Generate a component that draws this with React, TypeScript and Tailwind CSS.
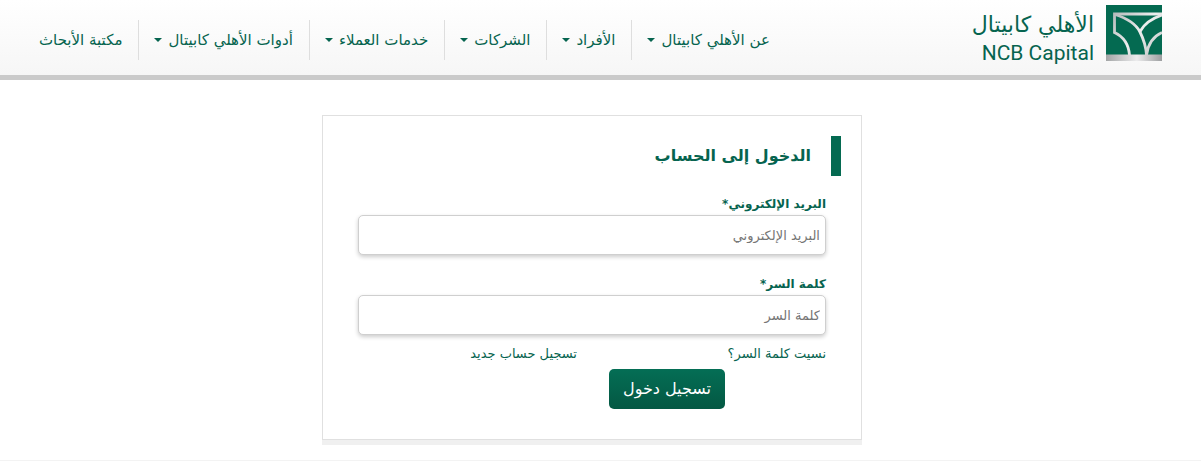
import React, { useState } from "react";

const navItems = [
  { title: "عن الأهلي كابيتال", hasMenu: true },
  { title: "الأفراد", hasMenu: true },
  { title: "الشركات", hasMenu: true },
  { title: "خدمات العملاء", hasMenu: true },
  { title: "أدوات الأهلي كابيتال", hasMenu: true },
  { title: "مكتبة الأبحاث", hasMenu: false },
];

function LogoMark() {
  return (
    <svg viewBox="0 0 56 56" className="h-14 w-14 shrink-0" aria-hidden="true">
      <defs>
        <linearGradient id="silver" x1="0" y1="0" x2="1" y2="0">
          <stop offset="0" stopColor="#a3a5a6" />
          <stop offset="0.55" stopColor="#ececed" />
          <stop offset="1" stopColor="#9c9ea0" />
        </linearGradient>
        <linearGradient id="lines" gradientUnits="userSpaceOnUse" x1="7" y1="8" x2="56" y2="50">
          <stop offset="0" stopColor="#b4b9b9" />
          <stop offset="0.5" stopColor="#eceeee" />
          <stop offset="1" stopColor="#bfc3c3" />
        </linearGradient>
      </defs>
      <rect width="56" height="56" fill="#046a51" />
      <g fill="none" stroke="url(#lines)" strokeWidth="2.8">
        <path d="M56 9H8.500V27.500C16 31 22.500 38 23.500 50" />
        <path d="M9 9.500C20 13 30 19 34 27C37.500 34 40 41 40.500 50" />
        <path d="M56 10C47 13 38.500 18 34 26.500" />
        <path d="M56 27.500C48 31 42 39 40.500 50" />
      </g>
      <rect y="49.500" width="56" height="6.500" fill="url(#silver)" />
    </svg>
  );
}

function Header() {
  return (
    <header className="flex h-20 items-start justify-between border-b-[5px] border-[#cacaca] bg-gradient-to-b from-white to-[#f6f6f6] pr-[39px] pl-6">
      <a href="#" className="flex gap-3 pt-[5px]">
        <LogoMark />
        <span className="flex flex-col pt-1.5 leading-7 whitespace-nowrap">
          <span className="text-[22px]">الأهلي كابيتال</span>
          <span dir="ltr" className="text-right font-[Roboto] text-[21px]">
            NCB Capital
          </span>
        </span>
      </a>
      <nav className="pt-5">
        <ul className="flex divide-x divide-[#dedede] text-[15px] leading-10 whitespace-nowrap">
          {navItems.map((item) => (
            <li key={item.title}>
              <a href="#" className="flex items-center gap-1.5 pr-4 pl-[15px]">
                {item.title}
                {item.hasMenu && (
                  <svg viewBox="0 0 8 4" className="h-1 w-2" fill="currentColor" aria-hidden="true">
                    <path d="M0 0h8L4 4z" />
                  </svg>
                )}
              </a>
            </li>
          ))}
        </ul>
      </nav>
    </header>
  );
}

type FieldProps = {
  id: string;
  type: string;
  label: string;
  value: string;
  onChange: (value: string) => void;
};

function Field({ id, type, label, value, onChange }: FieldProps) {
  return (
    <div className="mb-[19px]">
      <label htmlFor={id} className="block text-xs leading-[21px] font-bold">
        {label}*
      </label>
      <input
        id={id}
        type={type}
        placeholder={label}
        value={value}
        onChange={(e) => onChange(e.target.value)}
        className="h-10 w-full rounded-[5px] border border-[#cfcfcf] bg-white px-[5px] text-[13px] text-gray-700 shadow-[0_2px_4px_rgba(0,0,0,0.2)] placeholder:text-[#757575]"
      />
    </div>
  );
}

export default function App() {
  const [email, setEmail] = useState("");
  const [password, setPassword] = useState("");

  return (
    <div dir="rtl" className="bg-white font-['DejaVu_Sans',sans-serif] text-[#06644f]">
      <Header />

      <main className="border-b border-[#f3f3f3] pt-[35px] pr-[17px] pb-5">
        <section className="mx-auto max-w-[540px] border border-[#e0e0e0] bg-white px-5 pt-5 pb-[30px] shadow-[0_5px_0_#f0f0f0]">
          <h1 className="border-r-[10px] border-[#046a51] pr-5 text-base leading-10 font-bold">
            الدخول إلى الحساب
          </h1>

          <form className="px-[15px] pt-[18px]" onSubmit={(e) => e.preventDefault()}>
            <Field
              id="email"
              type="email"
              label="البريد الإلكتروني"
              value={email}
              onChange={setEmail}
            />
            <Field
              id="password"
              type="password"
              label="كلمة السر"
              value={password}
              onChange={setPassword}
            />

            <div className="-mt-2.5 flex text-[13px] leading-5">
              <a href="#" className="w-[249px]">
                نسيت كلمة السر؟
              </a>
              <a href="#">تسجيل حساب جديد</a>
            </div>

            <button
              type="submit"
              className="mt-[5px] mr-[101px] h-10 w-[116px] rounded-[5px] bg-gradient-to-b from-[#046e55] to-[#045843] text-base text-white"
            >
              تسجيل دخول
            </button>
          </form>
        </section>
      </main>
    </div>
  );
}
